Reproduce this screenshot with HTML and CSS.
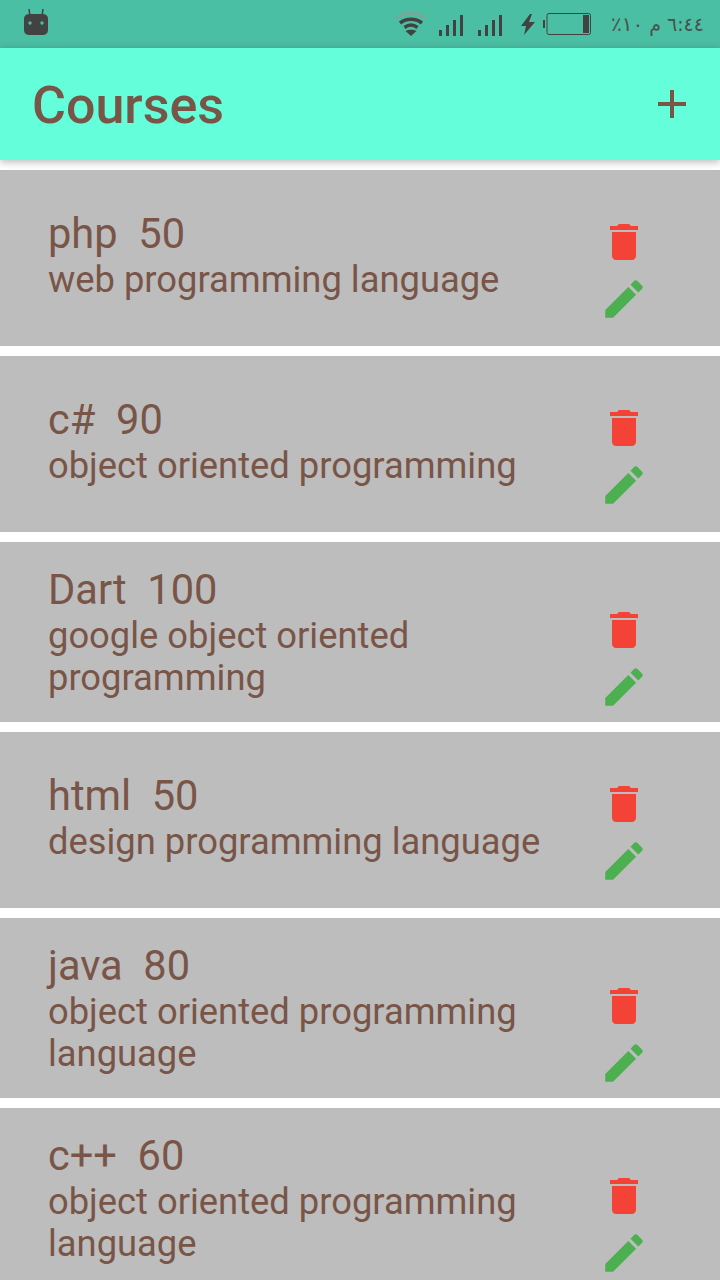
FILE: index.html
```html
<!DOCTYPE html>
<html lang="en">
<head>
<meta charset="utf-8">
<title>Courses</title>
<link rel="stylesheet" href="styles.css">
</head>
<body>
<svg class="defs" width="0" height="0" aria-hidden="true">
  <symbol id="trash" viewBox="0 0 24 24"><path d="M6 19c0 1.1.9 2 2 2h8c1.1 0 2-.9 2-2V7H6v12zM19 4h-3.5l-1-1h-5l-1 1H5v2h14V4z"/></symbol>
  <symbol id="pencil" viewBox="0 0 24 24"><path d="M3 17.25V21h3.75L17.81 9.94l-3.75-3.75L3 17.25zM20.71 7.04c.39-.39.39-1.02 0-1.41l-2.34-2.34c-.39-.39-1.02-.39-1.41 0l-1.83 1.83 3.75 3.75 1.83-1.83z"/></symbol>
  <symbol id="signal" viewBox="0 0 24 21"><path d="M0 15h3v6H0zM7 10h3v11H7zM14 5h3v16h-3zM21 0h3v21h-3z"/></symbol>
</svg>
<header class="status">
  <svg class="bot" width="24" height="28" viewBox="0 0 24 28">
    <path class="bot-ant" d="M5 1l1 7M19 1l-1 7"/>
    <path class="bot-body" d="M6 6h12c3 0 6 1 6 5v11c0 4-3 5-6 5H6c-3 0-6-1-6-5V11c0-4 3-5 6-5z"/>
    <circle class="bot-eye" cx="6" cy="15" r="1.700"/>
    <circle class="bot-eye" cx="18" cy="15" r="1.700"/>
  </svg>
  <div class="status-right">
    <svg class="wifi" width="30" height="24" viewBox="0 0 30 24">
      <path class="wifi-dim" d="M0.500 6.500C9 -1 21 -1 29.500 6.500"/>
      <path class="wifi-on" d="M4 11c6.500-5 15.500-5 22 0M8.500 15.500c4-3 9-3 13 0"/>
      <path class="wifi-dot" d="M15 24l-5.500-5c3.300-1.800 7.700-1.800 11 0z"/>
    </svg>
    <svg class="sig sig-one"><use href="#signal"/></svg>
    <svg class="sig sig-two"><use href="#signal"/></svg>
    <svg class="bolt" width="14" height="21" viewBox="0 0 14 21"><path d="M9 0L0 12h5l-2 9 11-13H8l3-8z"/></svg>
    <svg class="batt" width="48" height="22" viewBox="0 0 48 22">
      <rect class="batt-cap" x="0" y="7" width="2" height="8"/>
      <rect class="batt-shell" x="4" y="0.500" width="43.500" height="21" rx="2"/>
      <rect class="batt-fill" x="40" y="2" width="6" height="18"/>
    </svg>
    <bdo class="pct" dir="ltr">٪١٠</bdo>
    <span class="clock" dir="rtl">٦:٤٤ م</span>
  </div>
</header>
<header class="appbar">
  <h1 class="appbar-title">Courses</h1>
  <svg class="plus" width="28" height="28" viewBox="0 0 28 28"><path d="M12 0h4v12h12v4H16v12h-4V16H0v-4h12z"/></svg>
</header>
<main class="list">
  <article class="card">
    <div class="card-text"><div class="name">php&nbsp; 50</div><div class="desc">web programming language</div></div>
    <div class="actions"><svg class="ico del"><use href="#trash"/></svg><svg class="ico edit"><use href="#pencil"/></svg></div>
  </article>
  <article class="card">
    <div class="card-text"><div class="name">c#&nbsp; 90</div><div class="desc">object oriented programming</div></div>
    <div class="actions"><svg class="ico del"><use href="#trash"/></svg><svg class="ico edit"><use href="#pencil"/></svg></div>
  </article>
  <article class="card card-tall">
    <div class="card-text"><div class="name">Dart&nbsp; 100</div><div class="desc desc-narrow">google object oriented programming</div></div>
    <div class="actions"><svg class="ico del"><use href="#trash"/></svg><svg class="ico edit"><use href="#pencil"/></svg></div>
  </article>
  <article class="card">
    <div class="card-text"><div class="name">html&nbsp; 50</div><div class="desc">design programming language</div></div>
    <div class="actions"><svg class="ico del"><use href="#trash"/></svg><svg class="ico edit"><use href="#pencil"/></svg></div>
  </article>
  <article class="card card-tall">
    <div class="card-text"><div class="name">java&nbsp; 80</div><div class="desc desc-narrow">object oriented programming language</div></div>
    <div class="actions"><svg class="ico del"><use href="#trash"/></svg><svg class="ico edit"><use href="#pencil"/></svg></div>
  </article>
  <article class="card card-tall">
    <div class="card-text"><div class="name">c++&nbsp; 60</div><div class="desc desc-narrow">object oriented programming language</div></div>
    <div class="actions"><svg class="ico del"><use href="#trash"/></svg><svg class="ico edit"><use href="#pencil"/></svg></div>
  </article>
</main>
</body>
</html>
```

FILE: styles.css
```css
* { box-sizing: border-box; }
html, body { margin: 0; padding: 0; }
body {
  width: 720px;
  height: 1280px;
  overflow: hidden;
  background: #fff;
  font-family: Roboto, "Noto Sans", sans-serif;
  color: #795548;
}
.defs { position: absolute; }

.status {
  height: 48px;
  background: #4bbfa3;
  display: flex;
  align-items: flex-start;
  justify-content: space-between;
  padding: 8px 16px 0 24px;
  color: #424242;
}
.bot-ant { stroke: #424242; stroke-width: 1.500; fill: none; }
.bot-body { fill: #424242; }
.bot-eye { fill: #4bbfa3; }
.status-right { display: flex; align-items: flex-start; padding-top: 4px; }
.wifi-dim { stroke: #6fab98; stroke-width: 3.500; fill: none; }
.wifi-on { stroke: #424242; stroke-width: 3.500; fill: none; }
.wifi-dot { fill: #424242; }
.sig { width: 24px; height: 21px; fill: #424242; margin-top: 3px; }
.sig-one { margin-left: 13px; }
.sig-two { margin-left: 15px; }
.bolt { fill: #424242; margin-left: 19px; margin-top: 2px; }
.batt { margin-left: 8px; margin-top: 1px; }
.batt-cap, .batt-fill { fill: #424242; }
.batt-shell { fill: none; stroke: #424242; stroke-width: 1; }
.pct, .clock {
  font-family: "DejaVu Sans", sans-serif;
  font-size: 19px;
  line-height: 22px;
  color: #4a4f4f;
}
.pct { margin-left: 20px; width: 25px; margin-top: 1px; font-size: 20px; }
.clock { margin-left: 16px; width: 52px; margin-top: 1px; white-space: nowrap; }

.appbar {
  position: relative;
  height: 112px;
  background: #64ffda;
  display: flex;
  align-items: center;
  justify-content: space-between;
  padding: 0 34px 0 32px;
  box-shadow: 0 2px 8px rgba(0, 0, 0, 0.28);
}
.appbar-title {
  margin: 3px 0 0;
  font-size: 52px;
  font-weight: 500;
  line-height: 56px;
}
.plus { fill: #795548; }

.list {
  display: flex;
  flex-direction: column;
  gap: 10px;
  padding-top: 10px;
}
.card {
  height: 176px;
  flex: none;
  background: #bdbdbd;
  display: flex;
  justify-content: space-between;
  padding: 41px 72px 0 48px;
}
.card-tall { height: 180px; padding-top: 25px; }
.name { font-size: 41.600px; line-height: 46px; }
.desc { font-size: 36.350px; line-height: 42px; margin-top: 2px; }
.card-tall .desc { margin-top: 2px; }
.desc-narrow { width: 480px; }
.actions {
  flex: none;
  display: flex;
  flex-direction: column;
  gap: 8px;
  margin-top: 7px;
}
.card-tall .actions { margin-top: 39px; }
.ico { width: 48px; height: 48px; display: block; }
.edit { width: 50px; height: 50px; margin: 0 -1px; fill: #4caf50; }
.del { fill: #f44336; }
```
